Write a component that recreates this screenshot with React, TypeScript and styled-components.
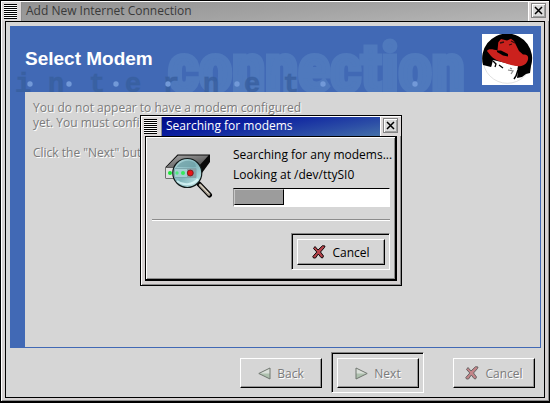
import React from "react";
import styled, { createGlobalStyle, css } from "styled-components";

const GlobalStyle = createGlobalStyle`
  * { box-sizing: border-box; }
  body { margin: 0; background: #d6d6d6; }
  body, button { font-family: "Open Sans", "Liberation Sans", sans-serif; font-size: 12px; line-height: 15px; color: #000; }
  h1, h2, p { margin: 0; font-weight: 400; }
`;

/* ---------- window chrome ---------- */

const Frame = styled.section<{ $main?: boolean }>`
  display: flex;
  flex-direction: column;
  background: #d6d2d2;
  border: 1px solid #000;
  ${(p) =>
    p.$main
      ? css`
          min-height: 100vh;
          border-bottom-width: 2px;
        `
      : css`
          width: 262px;
          pointer-events: auto;
        `}
  box-shadow: inset 1px 1px #fff, inset -1px -1px #8c8c8c;
`;

const TitleBar = styled.header`
  display: flex;
  height: 20px;
  padding: 1px 0 0 1px;
`;

const Grip = styled.button`
  width: 20px;
  padding: 1px 4px 1px 2px;
  border: 0;
  border-right: 1px solid #8c8c8c;
  background: #dcd8d8;
`;

const GripLines = styled.span`
  display: block;
  height: 15px;
  background: repeating-linear-gradient(#000 0 1px, #fff 1px 2px);
`;

const Title = styled.h2<{ $active?: boolean }>`
  flex: 1;
  padding-left: 4px;
  font-size: 12px;
  line-height: 18px;
  color: ${(p) => (p.$active ? "#fff" : "#3a3a3a")};
  background: ${(p) =>
    p.$active
      ? "linear-gradient(170deg, #000a84 0%, #0b1fa0 35%, #2c4ea6 75%, #4470a8 100%)"
      : "linear-gradient(175deg, #929292 0%, #a2a2a2 50%, #b6b6b6 100%)"};
`;

const CloseSlot = styled.div`
  display: flex;
  padding: 1px 3px 2px 2px;
  background: #dcd8d8;
  border-left: 1px solid #fff;
`;

const CloseButton = styled.button`
  display: grid;
  place-items: center;
  width: 15px;
  height: 15px;
  padding: 0;
  border: 1px solid #848484;
  background: #dcdcdc;
  box-shadow: inset 1px 1px #fff, inset -1px -1px #a0a0a0;
`;

const Client = styled.div<{ $main?: boolean }>`
  flex: 1;
  display: flex;
  flex-direction: column;
  margin: ${(p) => (p.$main ? "0 4px 3px" : "0 4px 4px")};
  background: #d6d6d6;
  border: 1px solid #000;
  ${(p) =>
    !p.$main &&
    css`
      border-width: 1px 2px 2px 1px;
      padding: 8px 5px 9px 6px;
      box-shadow: inset 1px 1px #fff, inset -1px -1px #8c8c8c;
    `}
`;

/* ---------- wizard ---------- */

const Wizard = styled.main`
  flex: 1;
  display: flex;
  flex-direction: column;
  margin: 4px 3px 0 4px;
  padding: 0 1px 1px 15px;
  background: #4169b5;
`;

const Banner = styled.div`
  position: relative;
  display: flex;
  align-items: center;
  justify-content: space-between;
  height: 66px;
  margin-left: -15px;
  padding: 0 7px 0 15px;
  overflow: hidden;
`;

const BannerArt = styled.svg`
  position: absolute;
  left: 0;
  bottom: 0;
`;

const Heading = styled.h1`
  position: relative;
  font-family: "Liberation Sans", sans-serif;
  font-size: 19px;
  line-height: 22px;
  font-weight: 700;
  color: #fff;
`;

const Logo = styled.svg`
  position: relative;
`;

const Page = styled.div`
  flex: 1;
  padding: 8px;
  background: #d6d6d6;
`;

const Notice = styled.p`
  max-width: 280px;
  margin-bottom: 15px;
  color: #7b7b7b;
  text-shadow: 1px 1px #fff;
`;

const Footer = styled.footer`
  display: flex;
  justify-content: flex-end;
  gap: 23px;
  padding: 4px 4px 4px;
`;

const ButtonPair = styled.div`
  display: flex;
  gap: 4px;
`;

/* ---------- buttons ---------- */

const Slot = styled.div<{ $default?: boolean }>`
  padding: 4px;
  border: solid transparent;
  border-width: 2px 1px 1px 2px;
  ${(p) =>
    p.$default &&
    css`
      border-width: 1px;
      border-color: #848484 #fff #fff #848484;
      padding: 5px 4px 4px 5px;
      box-shadow: inset 1px 1px #000;
    `}
`;

const PushButton = styled.button<{ $small?: boolean }>`
  display: flex;
  align-items: center;
  justify-content: center;
  gap: 6px;
  min-width: ${(p) => (p.$small ? 88 : 82)}px;
  height: ${(p) => (p.$small ? 26 : 30)}px;
  padding: 0 8px;
  background: #d6d6d6;
  border: 1px solid;
  border-color: #fff #000 #000 #fff;
  box-shadow: inset -1px -1px #949494;
  &:disabled {
    color: #7b7b7b;
    text-shadow: 1px 1px #fff;
  }
  &:disabled svg {
    opacity: 0.55;
  }
`;

/* ---------- dialog ---------- */

const Overlay = styled.div`
  position: fixed;
  inset: 0;
  display: flex;
  align-items: center;
  justify-content: center;
  padding: 0 8px 2px 0;
  pointer-events: none;
`;

const Status = styled.div`
  display: flex;
  gap: 20px;
  padding-left: 13px;
`;

const ModemIcon = styled.svg`
  flex: none;
  margin-top: 9px;
`;

const StatusText = styled.div`
  flex: 1;
  min-width: 0;
  line-height: 20px;
  white-space: nowrap;
`;

const Track = styled.div`
  height: 19px;
  margin-top: 3px;
  background: #fff;
  border: 1px solid;
  border-color: #000 #fff #fff #949494;
  padding-bottom: 1px;
`;

const Fill = styled.div`
  height: 100%;
  background: #9c9c9c;
  border: 1px solid;
  border-color: #c8c8c8 #000 #000 #c8c8c8;
`;

const Separator = styled.hr`
  width: 100%;
  height: 2px;
  margin: 12px 0;
  border: solid;
  border-width: 1px 0;
  border-color: #8c8c8c #fff #fff;
`;

const DialogActions = styled.div`
  display: flex;
  justify-content: flex-end;
`;

/* ---------- drawings ---------- */

const CloseMark = () => (
  <svg width="9" height="9" viewBox="0 0 9 9" aria-hidden="true">
    <path d="M1 1l7 7M8 1l-7 7" stroke="#000" strokeWidth="1.5" />
  </svg>
);

const CancelIcon = () => (
  <svg width="14" height="14" viewBox="0 0 14 14" aria-hidden="true">
    <path
      d="M1.5 3.5L3 1.5L6 5L10.5 .7L13 1L12.5 2.5L8.5 7L11.5 11L10.5 13L9 12.5L6.3 9L3.5 13L1.5 13L.8 11.5L4.8 7Z"
      fill="#b5424a"
      stroke="#100808"
      strokeWidth="1"
      strokeLinejoin="round"
    />
  </svg>
);

const ArrowIcon = ({ next }: { next?: boolean }) => (
  <svg width="13" height="13" viewBox="0 0 13 13" aria-hidden="true">
    <g transform={next ? "translate(13 0) scale(-1 1)" : undefined}>
      <path d="M.8 6.5L12 1V12Z" fill="#dfe8dc" />
      <path d="M.8 6.5H12V12Z" fill="#8fb08f" />
      <path d="M.8 6.5L12 1V12Z" fill="none" stroke="#1c281c" />
    </g>
  </svg>
);

const BannerPicture = () => (
  <BannerArt width="470" height="66" viewBox="0 0 470 66" aria-hidden="true">
    <text
      x="158"
      y="65"
      fontFamily="'Liberation Sans Narrow', 'Roboto Condensed', Roboto, sans-serif"
      fontWeight="700"
      fontSize="67"
      fill="#4f79bd"
      stroke="#4f79bd"
      strokeWidth="5"
    >
      connection
    </text>
    <text
      x="5 38 79 115 153 193 234 273"
      y="66"
      fontFamily="'Liberation Mono', monospace"
      fontWeight="700"
      fontSize="27"
      fill="#385f9f"
      fillOpacity="0.8"
      stroke="#385f9f"
      strokeOpacity="0.5"
    >
      internet
    </text>
    <g fill="#7299d8">
      {[20, 59, 106, 158, 227, 313, 405].map((x) => (
        <circle key={x} cx={x} cy="58" r="2.7" />
      ))}
    </g>
  </BannerArt>
);

const HatLogo = () => (
  <Logo width="51" height="51" viewBox="0 0 51 51" role="img" aria-label="Red Hat">
    <path d="M0 0h51v51H0z" fill="#fff" />
    <circle cx="25.3" cy="25" r="24.3" fill="#fff" stroke="#d8d8d8" strokeWidth=".8" />
    <path
      d="M1 31A25 25 0 1 1 49 32L48 39L44 40L40 43L35 44L36 36L30 32L11 27L12 31L9 33Z"
      fill="#000"
    />
    <path d="M11 26L36 32L35 37L34 43L29 47L22 47L12 42L9 34Z" fill="#fff" />
    <path
      d="M5 17C6 14 12 15.500 15.500 16.500L16.300 8.300L19 5L25 6.500L29 4.800L32 7L34 11L37 17L41 20.500C46 20 47 23 45.500 27C43 33 36 33 29 31C20 28 14 27 9 22Z"
      fill="#cb211d"
    />
    <path d="M15 16.500L19 16.500L26 20L26 22.500L21 21.500L15 18Z" fill="#000" />
    <path d="M18 9L22 8M29 7L33 9M27 11L30 10" stroke="#35100e" strokeWidth="1.300" />
    <path d="M11 27L14 30L13 33M17 31L21 34" stroke="#000" strokeWidth="1.300" fill="none" />
    <path d="M26 36L31 37L29 40M28 34L30 35" stroke="#888" strokeWidth="1.200" fill="none" />
    <path d="M36 36L34 42L32 45" stroke="#000" strokeWidth="1.500" fill="none" />
  </Logo>
);

const ModemPicture = () => (
  <ModemIcon width="48" height="44" viewBox="0 0 48 44" aria-hidden="true">
    <defs>
      <linearGradient id="lid" x1="0" y1="0" x2="1" y2="1">
        <stop offset="0" stopColor="#a8a8a8" />
        <stop offset="1" stopColor="#444" />
      </linearGradient>
      <linearGradient id="glass" x1="0" y1="0" x2="1" y2="1">
        <stop offset="0" stopColor="#b9dde0" />
        <stop offset=".5" stopColor="#7fb4ba" />
        <stop offset="1" stopColor="#d0f0f0" />
      </linearGradient>
    </defs>
    <path d="M.5 13L12.500 .5H45V8L33 24.500H.5Z" fill="#080808" />
    <path d="M1.500 13L13 1.500H43.500L33 13Z" fill="url(#lid)" />
    <path d="M1 13.500H32V24H1Z" fill="#b0b0b0" />
    <path d="M1 14H8V24H1Z" fill="#dedede" />
    <path d="M34 30L44.500 41" stroke="#000" strokeWidth="5" strokeLinecap="round" />
    <path d="M35 31L44 40.500" stroke="#aaa294" strokeWidth="2.600" strokeLinecap="round" />
    <path d="M35 30.500L43.500 39.500" stroke="#eee6d8" strokeWidth="1" />
    <circle cx="22.300" cy="19" r="14.500" fill="url(#glass)" stroke="#101818" strokeWidth="1.200" />
    <path d="M10 17A13 13 0 0 1 30 9L31 13H12Z" fill="#6c9ea4" opacity=".7" />
    <path d="M9.500 14.500H31V23.500H9.500Z" fill="#a5cfd2" stroke="#6e9aa0" strokeWidth=".7" />
    <path d="M22 14.500H31V23.500H22Z" fill="#8aa0a6" />
    <path d="M12 27C18 32 28 31 33 25" stroke="#e4ffff" strokeWidth="2" fill="none" opacity=".7" />
    <circle cx="5" cy="19" r="2" fill="#18e838" />
    <circle cx="12" cy="19" r="1.700" fill="#4fe87c" />
    <circle cx="18" cy="19" r="2" fill="#36e85c" />
    <circle cx="25.300" cy="19" r="3" fill="#e81418" stroke="#601010" strokeWidth=".7" />
  </ModemIcon>
);

/* ---------- assembly ---------- */

const WindowTitle = ({ text, active }: { text: string; active?: boolean }) => (
  <TitleBar>
    <Grip aria-label="Window menu">
      <GripLines />
    </Grip>
    <Title $active={active}>{text}</Title>
    <CloseSlot>
      <CloseButton aria-label="Close">
        <CloseMark />
      </CloseButton>
    </CloseSlot>
  </TitleBar>
);

export default function App() {
  const progress = 32;
  return (
    <>
      <GlobalStyle />
      <Frame $main>
        <WindowTitle text="Add New Internet Connection" />
        <Client $main>
          <Wizard>
            <Banner>
              <BannerPicture />
              <Heading>Select Modem</Heading>
              <HatLogo />
            </Banner>
            <Page>
              <Notice>
                You do not appear to have a modem configured
                <br />
                yet. You must configure one.
              </Notice>
              <Notice>Click the "Next" button</Notice>
            </Page>
          </Wizard>
          <Footer>
            <ButtonPair>
              <Slot>
                <PushButton disabled>
                  <ArrowIcon />
                  Back
                </PushButton>
              </Slot>
              <Slot $default>
                <PushButton disabled>
                  <ArrowIcon next />
                  Next
                </PushButton>
              </Slot>
            </ButtonPair>
            <Slot>
              <PushButton disabled>
                <CancelIcon />
                Cancel
              </PushButton>
            </Slot>
          </Footer>
        </Client>
      </Frame>
      <Overlay>
        <Frame role="dialog" aria-label="Searching for modems">
          <WindowTitle text="Searching for modems" active />
          <Client>
            <Status>
              <ModemPicture />
              <StatusText>
                <p>Searching for any modems...</p>
                <p>Looking at /dev/ttySI0</p>
                <Track role="progressbar" aria-label="Modem search" aria-valuenow={progress} aria-valuemin={0} aria-valuemax={100}>
                  <Fill style={{ width: `${progress}%` }} />
                </Track>
              </StatusText>
            </Status>
            <Separator />
            <DialogActions>
              <Slot $default>
                <PushButton $small>
                  <CancelIcon />
                  Cancel
                </PushButton>
              </Slot>
            </DialogActions>
          </Client>
        </Frame>
      </Overlay>
    </>
  );
}
